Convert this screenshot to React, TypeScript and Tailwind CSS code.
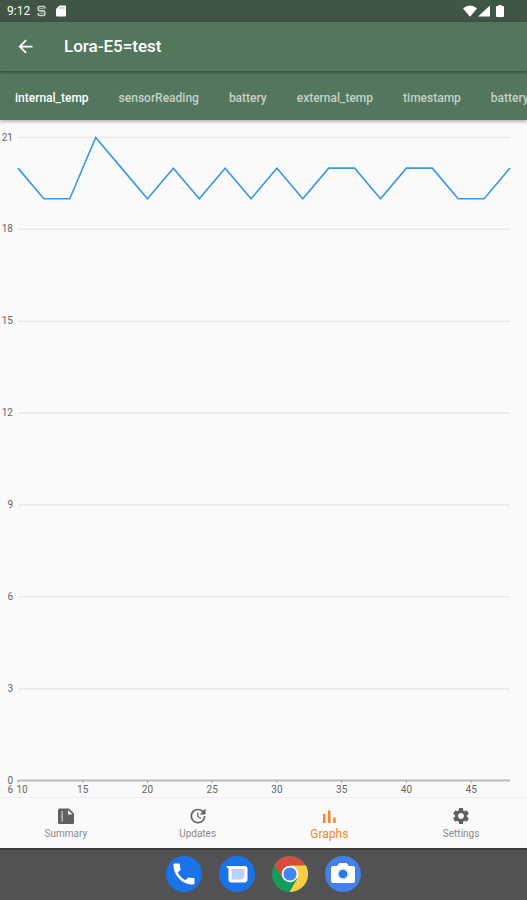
import React from "react";
import { MdArrowBack, MdUpdate, MdSettings, MdPhone } from "react-icons/md";

const tabs = ["internal_temp", "sensorReading", "battery", "external_temp", "timestamp", "battery"];
const readings = [20, 19, 19, 21, 20, 19, 20, 19, 20, 19, 20, 19, 20, 20, 19, 20, 20, 19, 19, 20];
const yTicks = [21, 18, 15, 12, 9, 6, 3];
const xTicks = [10, 15, 20, 25, 30, 35, 40, 45];

const LEFT = 18;
const RIGHT = 510;
const TOP = 17;
const BASE = 660;
const yFor = (value: number) => BASE + 0.5 - (value * (BASE - TOP)) / 21;
const xFor = (value: number) => LEFT + ((value - 10) * (RIGHT - LEFT)) / 38;

function StatusBar() {
  return (
    <div className="flex h-[22px] items-center justify-between bg-[#3f5646] pr-[23px] pl-[7px] text-white">
      <div className="flex items-center">
        <span className="text-xs">9:12</span>
        <svg className="ml-[7px] h-3 w-[9px]" viewBox="0 0 9 12" fill="none" stroke="#c6d0c8" aria-hidden="true">
          <path d="M7.800 3.500V2.800Q7.800 1.500 6.500 1.500H2.500Q1.200 1.500 1.200 2.800V4.200Q1.200 5.800 2.800 5.800H6.200Q7.800 5.800 7.800 7.500V9Q7.800 10.500 6.300 10.500H2.700Q1.200 10.500 1.200 9V8.200" strokeWidth="1.700" />
          <path d="M2.500 3.600H6.500M2.500 8.200H6.500" strokeWidth=".8" />
        </svg>
        <svg className="ml-[10px] h-3 w-[10px]" viewBox="0 0 10 12" fill="currentColor" aria-hidden="true">
          <path d="M3.500.5H9Q10 .5 10 1.500V10.500Q10 11.500 9 11.500H1Q0 11.500 0 10.500V4Z" />
          <path d="M4 2v2M6 2v2M8 2v2" stroke="#3f5646" strokeWidth=".5" />
        </svg>
      </div>
      <div className="flex items-center">
        <svg className="h-3 w-[14px]" viewBox="0 0 14 12" fill="currentColor" aria-hidden="true">
          <path d="M0 3.500Q7-2.500 14 3.500L7 11.700Z" />
        </svg>
        <svg className="ml-px h-3 w-3" viewBox="0 0 12 12" fill="currentColor" aria-hidden="true">
          <path d="M12 .5V11.500H0Z" />
        </svg>
        <svg className="ml-[6px] h-3 w-2" viewBox="0 0 8 12" fill="currentColor" aria-hidden="true">
          <path d="M2.500 0h3v1H7q1 0 1 1v9q0 1-1 1H1q-1 0-1-1V2q0-1 1-1h1.500Z" />
        </svg>
      </div>
    </div>
  );
}

function Chart() {
  const points = readings.map((value, i) => `${xFor(10 + i * 2)},${yFor(value)}`).join(" ");
  return (
    <svg className="block w-full" viewBox="0 0 527 677" role="img" aria-label="internal_temp readings">
      {yTicks.map((tick) => (
        <g key={tick}>
          <line x1={LEFT} x2={RIGHT} y1={yFor(tick)} y2={yFor(tick)} stroke="#e9e9e9" strokeWidth="1.500" />
          <text x="13" y={yFor(tick) + 3} textAnchor="end" fontSize="10" fill="#666">{tick}</text>
        </g>
      ))}
      <line x1={LEFT} x2={RIGHT} y1={BASE + 0.5} y2={BASE + 0.5} stroke="#bdbdbd" strokeWidth="2" />
      <text x="13" y="664" textAnchor="end" fontSize="10" fill="#666">0</text>
      <text x="13" y="673" textAnchor="end" fontSize="10" fill="#666">6</text>
      {xTicks.map((tick) => (
        <g key={tick}>
          <line x1={xFor(tick)} x2={xFor(tick)} y1={BASE} y2={BASE + 3} stroke="#a0a0a0" />
          <text x={xFor(tick) + (tick === 10 ? 4 : 0)} y="673" textAnchor="middle" fontSize="10" fill="#666">{tick}</text>
        </g>
      ))}
      <polyline points={points} fill="none" stroke="#3797e8" strokeWidth="1.600" />
    </svg>
  );
}

function SummaryIcon() {
  return (
    <svg className="size-[18px]" viewBox="0 0 18 18" aria-hidden="true">
      <path fill="#616161" d="M2.500 1.500H12L17 6.500v9Q17 17 15.500 17h-13Q1 17 1 15.500V3Q1 1.500 2.500 1.500Z" />
      <path fill="#fafafa" d="M11 3v4.500h4.500Z" />
      <path fill="#c4c4c4" d="M4.500 4h1.300v10.500H4.500Z" />
    </svg>
  );
}

function GraphsIcon() {
  return (
    <svg className="size-5" viewBox="0 0 20 20" fill="currentColor" aria-hidden="true">
      <path d="M4 8h2.500v9H4ZM9 4.500h2.500V17H9ZM14.200 11.500h2.500V17h-2.500Z" />
    </svg>
  );
}

const navItems = [
  { label: "Summary", icon: <SummaryIcon />, active: false },
  { label: "Updates", icon: <MdUpdate className="size-5 text-[#616161]" />, active: false },
  { label: "Graphs", icon: <GraphsIcon />, active: true },
  { label: "Settings", icon: <MdSettings className="size-5 text-[#616161]" />, active: false },
];

function Dock() {
  return (
    <div className="flex h-[52px] items-center justify-center gap-[17px] border-t-2 border-[#39393b] bg-[#525255] pb-[2px]">
      <button aria-label="Phone" className="flex size-9 items-center justify-center rounded-full bg-[#1a73e8] text-white">
        <MdPhone className="size-7" />
      </button>
      <button aria-label="Messages" className="size-9 rounded-full bg-[#1a73e8]">
        <svg viewBox="0 0 36 36" aria-hidden="true">
          <path d="M7 10h18.500q3 0 3 3v10.500q0 3-3 3h-13q-3 0-3-3V13Z" fill="white" />
          <path d="M12.500 13h13v8.500l-2.500 2H12.500Z" fill="#bdd0fb" />
        </svg>
      </button>
      <button aria-label="Chrome" className="size-9">
        <svg viewBox="0 0 36 36" aria-hidden="true">
          <circle cx="18" cy="18" r="18" fill="#159c58" />
          <path d="M18 18L2.400 9A18 18 0 0 1 33.600 9.500H18Z" fill="#da4b3e" />
          <path d="M18 9.500H33.900A18 18 0 0 1 17.500 36L25.400 22.500Z" fill="#fccc44" />
          <path d="M2.400 9L10.600 22.500L18 18L18 9.500Z" fill="#da4b3e" />
          <circle cx="18" cy="18" r="8.300" fill="white" />
          <circle cx="18" cy="18" r="6.600" fill="#4285f4" />
        </svg>
      </button>
      <button aria-label="Camera" className="size-9 rounded-full bg-[#4380ea]">
        <svg viewBox="0 0 36 36" aria-hidden="true">
          <path d="M8 10h4l2.500-3h7l2.500 3h4q2 0 2 2v13q0 2-2 2H8q-2 0-2-2V12q0-2 2-2Z" fill="white" />
          <circle cx="18" cy="18" r="6" fill="#dce8fc" />
          <circle cx="18" cy="18" r="4.300" fill="#2b78e4" />
        </svg>
      </button>
    </div>
  );
}

export default function App() {
  return (
    <div className="flex min-h-screen flex-col bg-[#fafafa] font-['Roboto',sans-serif]">
      <StatusBar />
      <header className="z-20 flex h-[49px] items-center bg-[#53765c] px-[15px] text-white shadow-[0_1px_3px_rgba(0,0,0,0.45)]">
        <button aria-label="Back">
          <MdArrowBack className="size-[21px]" />
        </button>
        <h1 className="ml-7 text-[17px] font-medium">Lora-E5=test</h1>
      </header>
      <div role="tablist" className="z-10 flex h-[49px] overflow-hidden bg-[#53765c] shadow-[0_1px_4px_rgba(0,0,0,0.4)]">
        {tabs.map((tab, i) => (
          <button
            key={i}
            role="tab"
            aria-selected={i === 0}
            className={`shrink-0 px-[15px] pt-1 text-xs font-medium ${i === 0 ? "text-white" : "text-[#c5d2c8]"}`}
          >
            {tab}
          </button>
        ))}
      </div>
      <main className="flex-1">
        <Chart />
      </main>
      <nav className="grid h-[51px] grid-cols-4 border-t border-[#eeeeee]">
        {navItems.map((item) => (
          <button
            key={item.label}
            className={`flex flex-col items-center pt-2 ${item.active ? "text-xs text-[#f5862e]" : "text-[10px] text-[#8a8a8a]"}`}
          >
            <span className="flex h-5 items-center">{item.icon}</span>
            <span className="leading-4">{item.label}</span>
          </button>
        ))}
      </nav>
      <Dock />
    </div>
  );
}
